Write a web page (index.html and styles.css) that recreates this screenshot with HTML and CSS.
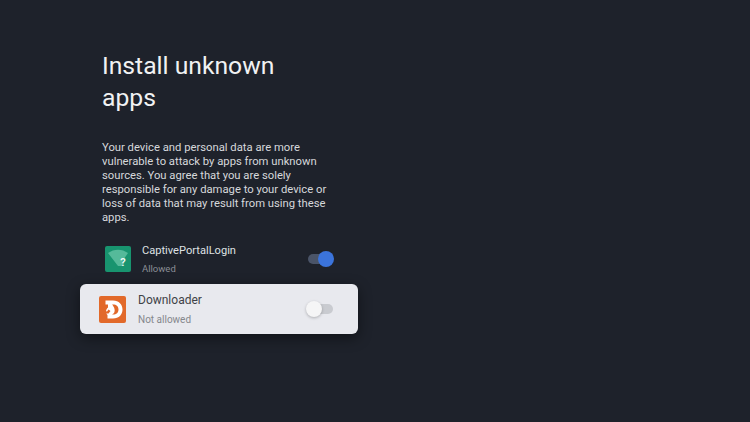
FILE: index.html
```html
<!DOCTYPE html>
<html lang="en">
<head>
<meta charset="utf-8">
<title>Install unknown apps</title>
<link rel="stylesheet" href="styles.css">
</head>
<body>
<main class="panel">
  <h1 class="title">Install unknown apps</h1>
  <p class="desc">Your device and personal data are more vulnerable to attack by apps from unknown sources. You agree that you are solely responsible for any damage to your device or loss of data that may result from using these apps.</p>
  <ul class="list">
    <li class="row">
      <svg class="icon icon-wifi" viewBox="0 0 26 26" aria-hidden="true">
        <rect width="26" height="26" rx="2" fill="#18946f"/>
        <path d="M3 7C9 2.500 17 2.500 23 7L17.500 15V20L13 20Z" fill="#55ba9a"/>
        <text x="18" y="19.500" class="q">?</text>
      </svg>
      <div class="text">
        <div class="name">CaptivePortalLogin</div>
        <div class="status">Allowed</div>
      </div>
      <div class="switch on"><span class="knob"></span></div>
    </li>
    <li class="row focused">
      <svg class="icon icon-dl" viewBox="0 0 27 27" aria-hidden="true">
        <rect width="27" height="27" rx="2" fill="#e2692a"/>
        <path d="M6.500 4.500H14C20 4.500 23.500 8.500 23.500 13.500S20 22.500 14 22.500H8.500V19C6.500 17 6.500 13.500 9 11.500V8.500H6.500Z" fill="#fff"/>
        <path d="M13 8.500H14C17.500 8.500 19.500 10.500 19.500 13.500S17.500 18.500 14 18.500H13C15.500 17.500 16 15 15.500 13C15 11 14 9.500 13 8.500Z" fill="#e2692a"/>
        <path d="M5 17.500H9.500L11.500 15L9.500 13.500L8 15.500L6 15Z" fill="#e2692a"/>
      </svg>
      <div class="text">
        <div class="name">Downloader</div>
        <div class="status">Not allowed</div>
      </div>
      <div class="switch off"><span class="knob"></span></div>
    </li>
  </ul>
</main>
</body>
</html>
```
FILE: styles.css
```css
* { box-sizing: border-box; }
html, body { margin: 0; height: 100%; }
body {
  width: 750px;
  height: 422px;
  overflow: hidden;
  background: #1e222b;
  font-family: Roboto, "Open Sans", sans-serif;
}
.panel {
  width: 278px;
  margin-left: 80px;
  padding-top: 50px;
}
.title {
  margin: 0;
  padding-left: 22px;
  width: 210px;
  font-size: 24.700px;
  font-weight: 400;
  line-height: 32px;
  color: #f1f2f3;
}
.desc {
  margin: 27px 0 0;
  padding-left: 22px;
  width: 256px;
  font-size: 11.250px;
  line-height: 13.900px;
  color: #d6d8db;
}
.list { list-style: none; margin: 10px 0 0; padding: 0; }
.row {
  display: flex;
  align-items: center;
  height: 50px;
  padding: 0 25px 0 25px;
}
.focused {
  height: 50px;
  padding: 0 25px 0 19px;
  background: #e8e9ee;
  border-radius: 6px;
  box-shadow: 0 4px 14px rgba(0, 0, 0, .45);
}
.icon { flex: none; width: 26px; height: 26px; }
.icon-dl { width: 27px; height: 27px; }
.q { font: 700 11px Roboto, sans-serif; fill: #eef8f4; text-anchor: middle; }
.text { flex: 1; margin: 0 0 1px 11px; }
.name { font-size: 11.100px; line-height: 15px; color: #dfe1e4; }
.status { margin-top: 5px; font-size: 9.500px; line-height: 12px; color: #8b8f96; }
.focused .text { margin: 0 0 0 12px; }
.focused .name { font-size: 12px; color: #3f4247; }
.focused .status { margin-top: 6px; font-size: 10px; color: #85878c; }
.switch { position: relative; width: 25px; height: 10px; border-radius: 5px; }
.switch.on { background: #4a5468; }
.switch.off { background: #c9cbd0; }
.knob { position: absolute; top: -3px; width: 16px; height: 16px; border-radius: 50%; }
.on .knob { right: -1px; background: #3b74dc; }
.off .knob { left: -2px; background: #f5f5f6; box-shadow: 0 1px 3px rgba(0, 0, 0, .25); }
```
